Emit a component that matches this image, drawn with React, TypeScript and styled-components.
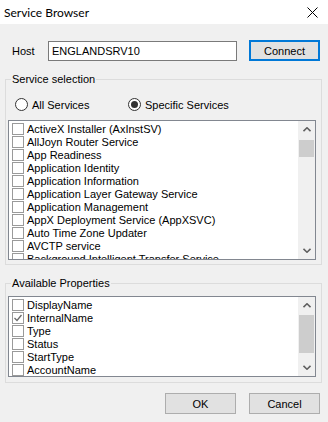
import React, { FC } from "react"
import styled, { createGlobalStyle } from "styled-components"

const services = [
  "ActiveX Installer (AxInstSV)",
  "AllJoyn Router Service",
  "App Readiness",
  "Application Identity",
  "Application Information",
  "Application Layer Gateway Service",
  "Application Management",
  "AppX Deployment Service (AppXSVC)",
  "Auto Time Zone Updater",
  "AVCTP service",
  "Background Intelligent Transfer Service",
]

const properties = [
  { name: "DisplayName", checked: false },
  { name: "InternalName", checked: true },
  { name: "Type", checked: false },
  { name: "Status", checked: false },
  { name: "StartType", checked: false },
  { name: "AccountName", checked: false },
]

const Chevron: FC<{ down?: boolean }> = ({ down }) => (
  <svg width="8" height="5" viewBox="0 0 8 5">
    <path
      d={down ? "M0.5 0.8 L4 4.2 L7.5 0.8" : "M0.5 4.2 L4 0.8 L7.5 4.2"}
      fill="none"
      stroke="#606060"
      strokeWidth="1.6"
    />
  </svg>
)

const Scrollbar: FC<{ offset: number, thumb: number }> = ({ offset, thumb }) => (
  <ScrollTrack>
    <ArrowBtn><Chevron /></ArrowBtn>
    <ThumbArea style={{ paddingTop: offset }}>
      <Thumb style={{ height: thumb }} />
    </ThumbArea>
    <ArrowBtn><Chevron down /></ArrowBtn>
  </ScrollTrack>
)

const CheckItem: FC<{ label: string, checked?: boolean }> = ({ label, checked }) => (
  <Row>
    <Box>
      {checked && (
        <svg width="10" height="10" viewBox="0 0 10 10">
          <path d="M1.5 5 L4 7.5 L8.5 2" fill="none" stroke="#6a6a6a" strokeWidth="1.3" />
        </svg>
      )}
    </Box>
    <span>{label}</span>
  </Row>
)

const App: FC = () => (
  <>
    <GlobalStyle />
    <Window>
      <TitleBar>
        <span>Service Browser</span>
        <svg width="11" height="11" viewBox="0 0 11 11">
          <path d="M0.5 0.5 L10.5 10.5 M10.5 0.5 L0.5 10.5" stroke="#000" strokeWidth="1" />
        </svg>
      </TitleBar>
      <Body>
        <HostRow>
          <HostLabel>Host</HostLabel>
          <TextInput defaultValue="ENGLANDSRV10" />
          <Button $default>Connect</Button>
        </HostRow>

        <Group $top={12}>
          <Legend>Service selection</Legend>
          <RadioRow>
            <RadioOption $width={113}>
              <Radio />
              <span>All Services</span>
            </RadioOption>
            <RadioOption>
              <Radio $checked />
              <span>Specific Services</span>
            </RadioOption>
          </RadioRow>
          <ListBox $height={140} $top={9}>
            <Items>
              {services.map(s => <CheckItem key={s} label={s} />)}
            </Items>
            <Scrollbar offset={2} thumb={17} />
          </ListBox>
        </Group>

        <Group $top={12} $bottom={5}>
          <Legend>Available Properties</Legend>
          <ListBox $height={81} $top={6}>
            <Items>
              {properties.map(p => <CheckItem key={p.name} label={p.name} checked={p.checked} />)}
            </Items>
            <Scrollbar offset={1} thumb={38} />
          </ListBox>
        </Group>

        <Footer>
          <Button>OK</Button>
          <Button>Cancel</Button>
        </Footer>
      </Body>
    </Window>
  </>
)

const GlobalStyle = createGlobalStyle`
  html, body {
    margin: 0;
    background: #f0f0f0;
  }
`

const Window = styled.div`
  width: 328px;
  height: 422px;
  background: #f0f0f0;
  display: flex;
  flex-direction: column;
  font-family: "Liberation Sans", Arial, sans-serif;
  font-size: 11px;
  color: #000;
  overflow: hidden;
`

const TitleBar = styled.div`
  height: 24px;
  background: #fff;
  display: flex;
  align-items: center;
  justify-content: space-between;
  padding: 0 10px 0 4px;
  font-family: Lato, "Noto Sans", sans-serif;
  font-size: 12px;
`

const Body = styled.div`
  display: flex;
  flex-direction: column;
  padding: 16px 6px 0 5px;
`

const HostRow = styled.div`
  display: flex;
  align-items: flex-end;
  padding: 0 2px 0 7px;
`

const HostLabel = styled.label`
  width: 36px;
  align-self: center;
  padding-top: 1px;
`

const TextInput = styled.input`
  box-sizing: border-box;
  width: 189px;
  height: 20px;
  margin: 0 12px 0 0;
  padding: 0 3px;
  border: 1px solid #7a7a7a;
  background: #fff;
  font: inherit;
  color: #000;
  outline: none;
`

const Button = styled.button<{ $default?: boolean }>`
  box-sizing: border-box;
  width: 71px;
  height: 21px;
  padding: 0;
  background: #e1e1e1;
  border: ${p => p.$default ? "2px solid #0078d7" : "1px solid #adadad"};
  font: inherit;
  color: #000;
`

const Group = styled.fieldset<{ $top: number, $bottom?: number }>`
  margin: ${p => p.$top}px 0 0 0;
  padding: 0 5px ${p => p.$bottom ?? 4}px 2px;
  border: 1px solid #dcdcdc;
  min-width: 0;
`

const Legend = styled.legend`
  margin-left: 3px;
  padding: 0 1px;
  line-height: 13px;
`

const RadioRow = styled.div`
  display: flex;
  align-items: center;
  margin-top: 12px;
  padding-left: 7px;
  height: 13px;
`

const RadioOption = styled.label<{ $width?: number }>`
  display: flex;
  align-items: center;
  gap: 4px;
  width: ${p => p.$width ? `${p.$width}px` : "auto"};
`

const Radio = styled.span<{ $checked?: boolean }>`
  box-sizing: border-box;
  width: 13px;
  height: 13px;
  border: 1px solid #333;
  border-radius: 50%;
  background: #fff;
  display: flex;
  align-items: center;
  justify-content: center;

  &::after {
    content: "";
    width: 7px;
    height: 7px;
    border-radius: 50%;
    background: ${p => p.$checked ? "#333" : "transparent"};
  }
`

const ListBox = styled.div<{ $height: number, $top: number }>`
  box-sizing: border-box;
  height: ${p => p.$height}px;
  margin-top: ${p => p.$top}px;
  border: 1px solid #828790;
  background: #fff;
  display: flex;
`

const Items = styled.div`
  flex: 1;
  overflow: hidden;
  padding: 1px 0 0 3px;
`

const Row = styled.div`
  display: flex;
  align-items: center;
  gap: 3px;
  height: 13px;
  white-space: nowrap;
`

const Box = styled.span`
  box-sizing: border-box;
  flex: none;
  width: 12px;
  height: 12px;
  border: 1px solid #9a9a9a;
  background: #fff;
  display: flex;
  align-items: center;
  justify-content: center;
`

const ScrollTrack = styled.div`
  width: 17px;
  flex: none;
  background: #f0f0f0;
  display: flex;
  flex-direction: column;
`

const ArrowBtn = styled.div`
  height: 17px;
  flex: none;
  display: flex;
  align-items: center;
  justify-content: center;
`

const ThumbArea = styled.div`
  flex: 1;
  padding: 0 1px;
`

const Thumb = styled.div`
  background: #cdcdcd;
`

const Footer = styled.div`
  display: flex;
  justify-content: flex-end;
  gap: 13px;
  margin-top: 10px;
  padding-right: 2px;
`

export default App
